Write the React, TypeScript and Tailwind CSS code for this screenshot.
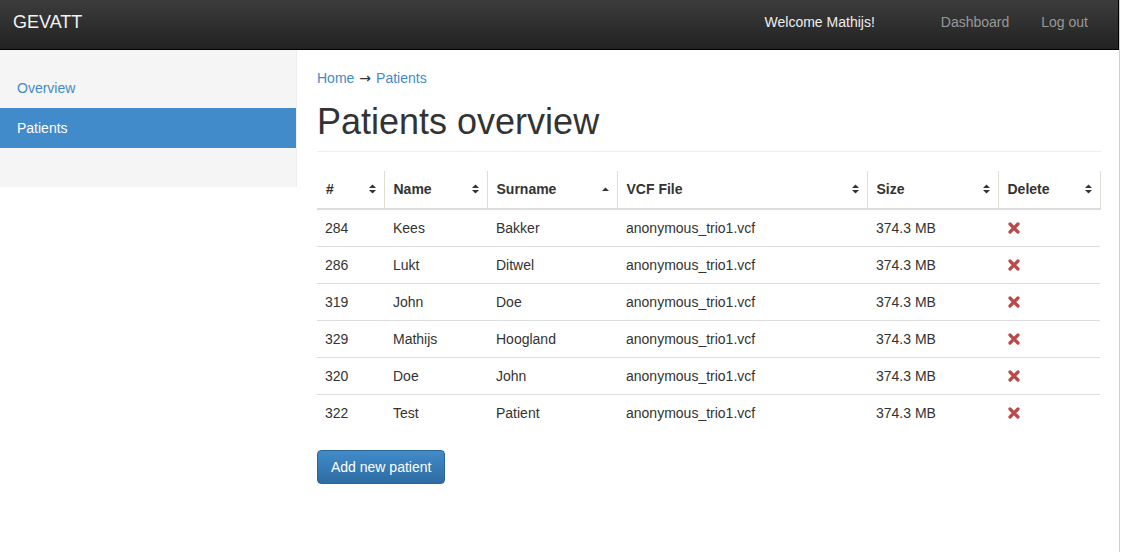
import React from "react";

const rows = [
  ["284", "Kees", "Bakker"],
  ["286", "Lukt", "Ditwel"],
  ["319", "John", "Doe"],
  ["329", "Mathijs", "Hoogland"],
  ["320", "Doe", "John"],
  ["322", "Test", "Patient"],
];

function SortBoth() {
  return (
    <svg width="7" height="10" viewBox="0 0 7 10" className="block">
      <path d="M0 4 L3.5 0.5 L7 4 Z" fill="#333" />
      <path d="M0 6 L3.5 9.5 L7 6 Z" fill="#333" />
    </svg>
  );
}

function SortUp() {
  return (
    <svg width="7" height="10" viewBox="0 0 7 10" className="block">
      <path d="M0 7 L3.5 3.5 L7 7 Z" fill="#333" />
    </svg>
  );
}

function RemoveIcon() {
  return (
    <svg width="12" height="12" viewBox="0 0 12 12" className="block">
      <path d="M2 2 L10 10 M10 2 L2 10" stroke="#b94a48" strokeWidth="3.2" strokeLinecap="round" />
    </svg>
  );
}

function Th({ label, w, sort }: { label: string; w: number; sort: "both" | "up" }) {
  return (
    <th
      style={{ width: w }}
      className="h-[38px] border-b-2 border-[#ddd] border-r border-r-[#e2ded2] pl-[9px] pr-2 text-left align-middle font-bold"
    >
      <div className="flex items-center justify-between pb-px">
        <span>{label}</span>
        {sort === "both" ? <SortBoth /> : <SortUp />}
      </div>
    </th>
  );
}

export default function App() {
  return (
    <div
      className="w-[1121px] h-[552px] overflow-hidden bg-white text-[14px] leading-5 text-[#333]"
      style={{ fontFamily: '"Liberation Sans", Arial, sans-serif' }}
    >
      <div className="w-[1120px] h-[552px] border-r border-[#cfcfcf] flex flex-col">
        <header className="h-[50px] shrink-0 flex items-center pb-[5px] border-b border-black border-r border-r-black bg-gradient-to-b from-[#3c3c3c] to-[#222]">
          <div className="pl-[13px] text-[18px] text-[#f2f2f2]">GEVATT</div>
          <div className="ml-auto flex items-center pr-[30px]">
            <span className="text-[#eee] mr-[66px]">Welcome Mathijs!</span>
            <span className="text-[#999] mr-[32px]">Dashboard</span>
            <span className="text-[#999]">Log out</span>
          </div>
        </header>
        <div className="flex flex-1">
          <aside className="w-[297px] shrink-0 self-start bg-[#f5f5f5] border-r border-[#eee] pt-[18px] pb-[39px]">
            <div className="h-[40px] px-[17px] flex items-center text-[#428bca]">Overview</div>
            <div className="h-[40px] px-[17px] flex items-center bg-[#428bca] text-white">Patients</div>
          </aside>
          <main className="flex-1 pl-[20px] pr-[20px] pt-[18px]">
            <div className="flex items-center h-5">
              <span className="text-[#428bca]">Home</span>
              <span
                className="mx-[5px] text-[#333] text-[14px]"
                style={{ fontFamily: '"DejaVu Sans", sans-serif' }}
              >
                →
              </span>
              <span className="text-[#428bca]">Patients</span>
            </div>
            <div className="mt-[14px] pb-[9px] border-b border-[#eee]">
              <h1 className="text-[36px] leading-[40px]">Patients overview</h1>
            </div>
            <table className="mt-[19px] w-[783px] border-collapse table-fixed">
              <thead>
                <tr>
                  <Th label="#" w={67} sort="both" />
                  <Th label="Name" w={103} sort="both" />
                  <Th label="Surname" w={130} sort="up" />
                  <Th label="VCF File" w={250} sort="both" />
                  <Th label="Size" w={131} sort="both" />
                  <Th label="Delete" w={102} sort="both" />
                </tr>
              </thead>
              <tbody>
                {rows.map((r, i) => (
                  <tr key={i} className={i > 0 ? "border-t border-[#ddd]" : ""}>
                    <td className="pl-2 pr-2 h-[37px] align-middle">{r[0]}</td>
                    <td className="pl-[9px] pr-2 align-middle">{r[1]}</td>
                    <td className="pl-[9px] pr-2 align-middle">{r[2]}</td>
                    <td className="pl-[9px] pr-2 align-middle">anonymous_trio1.vcf</td>
                    <td className="pl-[9px] pr-2 align-middle">374.3 MB</td>
                    <td className="pl-[10px] pr-2 align-middle">
                      <RemoveIcon />
                    </td>
                  </tr>
                ))}
              </tbody>
            </table>
            <button className="mt-[19px] h-[34px] px-[13px] rounded-[4px] border border-[#2b669a] bg-gradient-to-b from-[#428bca] to-[#2d6ca2] text-white text-[14px]">
              Add new patient
            </button>
          </main>
        </div>
      </div>
    </div>
  );
}
